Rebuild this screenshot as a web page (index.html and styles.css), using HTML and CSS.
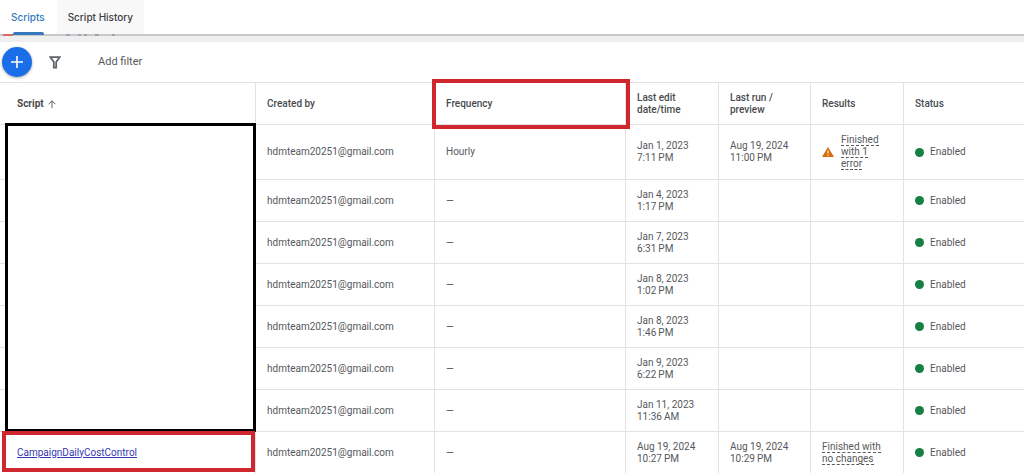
FILE: index.html
```html
<!DOCTYPE html>
<html lang="en">
<head>
<meta charset="utf-8">
<title>Scripts</title>
<link rel="stylesheet" href="styles.css">
</head>
<body>
<nav class="tabs">
  <a class="tab tab-active" href="#scripts">Scripts</a>
  <a class="tab tab-muted" href="#history">Script History</a>
</nav>
<div class="divider"><svg class="remnant" viewBox="0 0 130 2" aria-hidden="true"><path d="M3 1h10" stroke="#d86a64" stroke-width="2"/><path d="M66 1h4M78 1h3M84 1h3M95 1h4M112 1h3" stroke="#7482a0" stroke-width="1"/></svg></div>
<main>
  <div class="toolbar">
    <button class="add" aria-label="Add script"><svg viewBox="0 0 12 12"><path d="M6 0v12M0 6h12" stroke="#fff" stroke-width="1.6"/></svg></button>
    <button class="filter-icon" aria-label="Filter"><svg viewBox="0 0 12 13"><path d="M1.4 1.2h9.2L7.2 6v5.6H4.8V6z" fill="none" stroke="#5f6368" stroke-width="1.8"/></svg></button>
    <button class="add-filter">Add filter</button>
  </div>
  <table class="scripts">
    <colgroup><col class="c-script"><col class="c-owner"><col class="c-freq"><col class="c-edit"><col class="c-run"><col class="c-result"><col></colgroup>
    <thead>
      <tr>
        <th>Script <svg class="arrow" viewBox="0 0 8 8"><path d="M4 8V.8M.6 4.2L4 .8l3.4 3.4" fill="none" stroke="#5f6368"/></svg></th>
        <th>Created by</th>
        <th class="marked">Frequency<span class="mark mark-freq"></span></th>
        <th>Last edit<br>date/time</th>
        <th>Last run /<br>preview</th>
        <th>Results</th>
        <th>Status</th>
      </tr>
    </thead>
    <tbody>
      <tr class="tall"><td><div class="redacted"></div></td><td>hdmteam20251@gmail.com</td><td>Hourly</td><td>Jan 1, 2023<br>7:11&#8201;PM</td><td>Aug 19, 2024<br>11:00&#8201;PM</td><td><div class="result"><svg class="warn" viewBox="0 0 12 10"><path d="M6 0l6 10H0z" fill="#d56e0c"/><path d="M6 3.4v3.2M6 7.5v1.2" stroke="#fff" stroke-width="1.1"/></svg><span><span class="hint">Finished</span><br><span class="hint">with 1</span><br><span class="hint">error</span></span></div></td><td><span class="status">Enabled</span></td></tr>
      <tr><td></td><td>hdmteam20251@gmail.com</td><td>—</td><td>Jan 4, 2023<br>1:17&#8201;PM</td><td></td><td></td><td><span class="status">Enabled</span></td></tr>
      <tr><td></td><td>hdmteam20251@gmail.com</td><td>—</td><td>Jan 7, 2023<br>6:31&#8201;PM</td><td></td><td></td><td><span class="status">Enabled</span></td></tr>
      <tr><td></td><td>hdmteam20251@gmail.com</td><td>—</td><td>Jan 8, 2023<br>1:02&#8201;PM</td><td></td><td></td><td><span class="status">Enabled</span></td></tr>
      <tr><td></td><td>hdmteam20251@gmail.com</td><td>—</td><td>Jan 8, 2023<br>1:46&#8201;PM</td><td></td><td></td><td><span class="status">Enabled</span></td></tr>
      <tr><td></td><td>hdmteam20251@gmail.com</td><td>—</td><td>Jan 9, 2023<br>6:22&#8201;PM</td><td></td><td></td><td><span class="status">Enabled</span></td></tr>
      <tr><td></td><td>hdmteam20251@gmail.com</td><td>—</td><td>Jan 11, 2023<br>11:36&#8201;AM</td><td></td><td></td><td><span class="status">Enabled</span></td></tr>
      <tr><td class="marked"><a class="name" href="#script">CampaignDailyCostControl</a><span class="mark mark-name"></span></td><td>hdmteam20251@gmail.com</td><td>—</td><td>Aug 19, 2024<br>10:27&#8201;PM</td><td>Aug 19, 2024<br>10:29&#8201;PM</td><td><span class="hint">Finished with</span><br><span class="hint">no changes</span></td><td><span class="status">Enabled</span></td></tr>
    </tbody>
  </table>
</main>
</body>
</html>
```
FILE: styles.css
```css
* { box-sizing: border-box; }
body { margin: 0; background: #fff; color: #56595c; font: 10px/12px Roboto, sans-serif; }
button { border: 0; padding: 0; background: none; color: inherit; font: inherit; }
svg { display: block; }

.tabs { display: flex; height: 34px; }
.tab { position: relative; display: flex; align-items: center; padding: 0 11px; color: #3c4043; font-family: Inter, sans-serif; font-size: 10px; font-weight: 500; text-decoration: none; }
.tab-active { margin-right: 1px; color: #3478bd; }
.tab-active::after { content: ""; position: absolute; z-index: 1; left: 13px; right: 12px; bottom: -1px; height: 3px; border-radius: 2px 2px 0 0; background: #3777bd; }
.tab-muted { background: #f8f8f8; }
.divider { height: 8px; border-top: 2px solid #c8c8c8; background: #efeff0; }
.remnant { width: 130px; height: 2px; margin-top: -2px; }

.toolbar { display: flex; align-items: center; height: 40px; padding-left: 2px; }
.add { display: grid; place-items: center; width: 30px; height: 30px; border-radius: 50%; background: #1a6fe8; box-shadow: 0 1px 3px #0005; }
.add svg { width: 12px; height: 12px; }
.filter-icon { margin: 0 37px 0 17px; }
.filter-icon svg { width: 12px; height: 13px; }
.add-filter { font-size: 11px; }

.scripts { width: 100%; border-spacing: 0; table-layout: fixed; }
.c-script { width: 256px; }
.c-owner { width: 179px; }
.c-freq { width: 191px; }
.c-edit, .c-result { width: 93px; }
.c-run { width: 92px; }
th, td { height: 42px; padding: 0 0 0 11px; border-top: 1px solid #e2e2e3; border-right: 1px solid #e2e2e3; text-align: left; vertical-align: middle; }
th:first-child, td:first-child { padding-left: 17px; }
th:last-child, td:last-child { border-right: 0; }
th { color: #484b4e; font-weight: 500; }
th:first-child { font-weight: 700; }
.tall td { height: 55px; }
.arrow { display: inline-block; width: 8px; height: 8px; margin-left: 2px; vertical-align: -1px; }
tbody, .marked { position: relative; }
.redacted { position: absolute; z-index: 1; top: -1px; left: 5px; bottom: 41px; width: 251px; border: 3px solid #000; background: #fff; }
.mark { position: absolute; z-index: 2; border: 4px solid #d0262e; pointer-events: none; }
.mark-freq { inset: -4px -5px -5px -3px; }
.mark-name { inset: -1px 0 1px 2px; }
.name { color: #3538b0; }
.result { display: flex; align-items: center; gap: 7px; }
.warn { width: 12px; height: 10px; }
.hint { border-bottom: 1px dashed #56595c; }
.status { display: flex; align-items: center; gap: 6px; }
.status::before { content: ""; width: 9px; height: 9px; border-radius: 50%; background: #158043; }
```
